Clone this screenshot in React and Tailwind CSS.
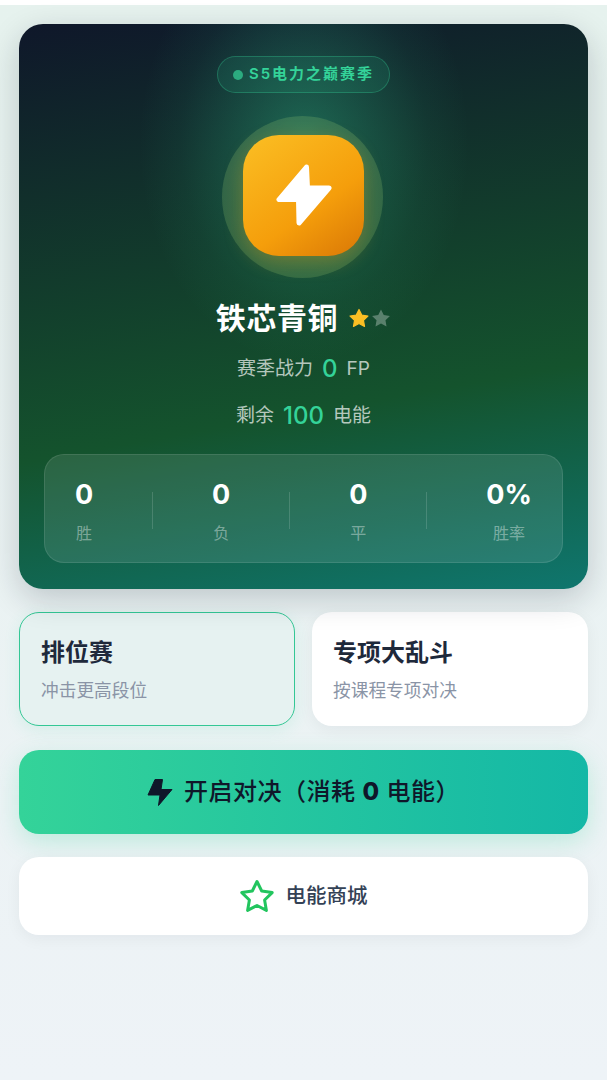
const stats = [
  { label: "胜", value: "0" },
  { label: "负", value: "0" },
  { label: "平", value: "0" },
  { label: "胜率", value: "0%" },
];

const STAR_POINTS = "17,2 21.7,11.5 32.2,13.1 24.6,20.5 26.4,30.9 17,26 7.6,30.9 9.4,20.5 1.8,13.1 12.3,11.5";

const StarIcon = ({ size, fill, stroke, strokeWidth }) => (
  <svg width={size} height={size} viewBox="0 0 34 33">
    <polygon points={STAR_POINTS} fill={fill} stroke={stroke} strokeWidth={strokeWidth} strokeLinejoin="round" />
  </svg>
);

const StatsBar = () => (
  <div className="mx-[25px] mt-[22px] flex h-[109px] items-center justify-between rounded-[20px] border border-white/10 bg-white/10 px-[30px] pt-[4px]">
    {stats.map((stat, index) => (
      <div key={stat.label} className="contents">
        {index > 0 && <div className="h-[37px] w-px bg-white/15" />}
        <div className="flex flex-col items-center">
          <div className="text-[27px] leading-[36px] font-bold text-white">{stat.value}</div>
          <div className="mt-[8px] text-[16px] leading-[24px] text-white/40">{stat.label}</div>
        </div>
      </div>
    ))}
  </div>
);

const HeroCard = () => (
  <div className="relative h-[565px] overflow-hidden rounded-[24px] bg-[linear-gradient(170deg,#0f172a_0%,#14532d_66%,#0f766e_100%)] pt-[32px] shadow-[0_10px_32px_rgba(15,23,42,0.2)]">
    <div className="absolute top-[-100px] left-1/2 h-[440px] w-[330px] -translate-x-1/2 bg-[radial-gradient(closest-side,rgba(52,211,153,0.36)_0%,rgba(52,211,153,0.2)_40%,rgba(52,211,153,0.06)_75%,transparent_100%)]" />
    <div className="relative flex flex-col items-center">
      <div className="flex h-[37px] w-[173px] items-center justify-center gap-[6px] rounded-full border border-[#34d399]/30 bg-[#34d399]/10">
        <span className="h-[10px] w-[10px] rounded-full bg-[#34d399]/70" />
        <span className="text-[15px] font-semibold tracking-[2px] text-[#34d399]">S5电力之巅赛季</span>
      </div>
      <div className="mt-[23px] mr-[2px] flex h-[162px] w-[161px] items-center justify-center rounded-full bg-[#a3d977]/20">
        <div className="mb-[4px] ml-[2px] flex h-[121px] w-[121px] items-center justify-center rounded-[36px] bg-[linear-gradient(145deg,#fbbf24,#f59e0b_60%,#d97706)] shadow-[0_6px_20px_rgba(245,158,11,0.3)]">
          <svg width="56" height="63" viewBox="0 0 56 63">
            <path d="M30.5 3 L3 35.5 H22.5 L23 59 L53 24 H31.5 Z" fill="white" stroke="white" strokeWidth="5" strokeLinejoin="round" />
          </svg>
        </div>
      </div>
      <div className="mt-[18px] flex h-[44px] items-center gap-[11px]">
        <h1 className="text-[30px] leading-[44px] font-bold tracking-[0.6px] text-white">铁芯青铜</h1>
        <div className="flex gap-[2px]">
          <StarIcon size={20} fill="#fbbf24" stroke="#fbbf24" strokeWidth={2} />
          <StarIcon size={20} fill="#ffffff4d" />
        </div>
      </div>
      <div className="mt-[13px] flex h-[32px] items-center gap-[9px] text-[19px] text-white/70">
        <span>赛季战力</span>
        <span className="text-[24px] font-medium text-[#34d399]">0</span>
        <span>FP</span>
      </div>
      <div className="mt-[15px] flex h-[32px] items-center gap-[9px] text-[19px] text-white/70">
        <span>剩余</span>
        <span className="text-[24px] font-medium text-[#34d399]">100</span>
        <span>电能</span>
      </div>
    </div>
    <div className="relative">
      <StatsBar />
    </div>
  </div>
);

const ModeCard = ({ title, desc, active }) => (
  <div
    className={`flex h-[114px] flex-col justify-center rounded-[20px] pt-[2px] pl-[21px] ${
      active
        ? "border-[1.5px] border-[#34c795] bg-[#e6f2f1] shadow-[0_4px_16px_rgba(52,211,153,0.12)]"
        : "bg-white shadow-[0_4px_16px_rgba(15,23,42,0.05)]"
    }`}
  >
    <div className="text-[24px] leading-[32px] font-bold text-[#1e293b]">{title}</div>
    <div className="mt-[10px] text-[17.7px] leading-[24px] text-[#8a94a6]">{desc}</div>
  </div>
);

export default function App() {
  return (
    <div className="min-h-[1080px] bg-white pt-[5px] font-['Inter','Noto_Sans_CJK_SC',sans-serif]">
      <div className="h-[1075px] bg-[linear-gradient(180deg,#e6f2ee_0%,#eef3f7_100%)] px-[19px] pt-[19px]">
        <HeroCard />
        <div className="mt-[23px] grid grid-cols-2 gap-[17px]">
          <ModeCard title="排位赛" desc="冲击更高段位" active />
          <ModeCard title="专项大乱斗" desc="按课程专项对决" />
        </div>
        <button className="mt-[24px] flex h-[84px] w-full items-center justify-center gap-[11px] rounded-[20px] bg-[linear-gradient(90deg,#34d399,#14b8a6)] text-[24px] font-medium tracking-[0.5px] text-[#0f172a] shadow-[0_8px_24px_rgba(52,211,153,0.25)]">
          <svg width="26" height="29" viewBox="0 0 26 29">
            <path d="M8 1.5 L15.5 1.5 L14 11.5 H25 L11.5 27.5 L13 17 H1 Z" fill="#0f172a" stroke="#0f172a" strokeWidth="1" strokeLinejoin="round" />
          </svg>
          <span>开启对决（消耗 <b className="font-extrabold">0</b> 电能）</span>
        </button>
        <button className="mt-[23px] flex h-[78px] w-full items-center justify-center gap-[12px] rounded-[20px] bg-white text-[20.5px] font-medium text-[#334155] shadow-[0_4px_16px_rgba(15,23,42,0.05)]">
          <StarIcon size={34} fill="none" stroke="#22c55e" strokeWidth={3} />
          <span>电能商城</span>
        </button>
      </div>
    </div>
  );
}
